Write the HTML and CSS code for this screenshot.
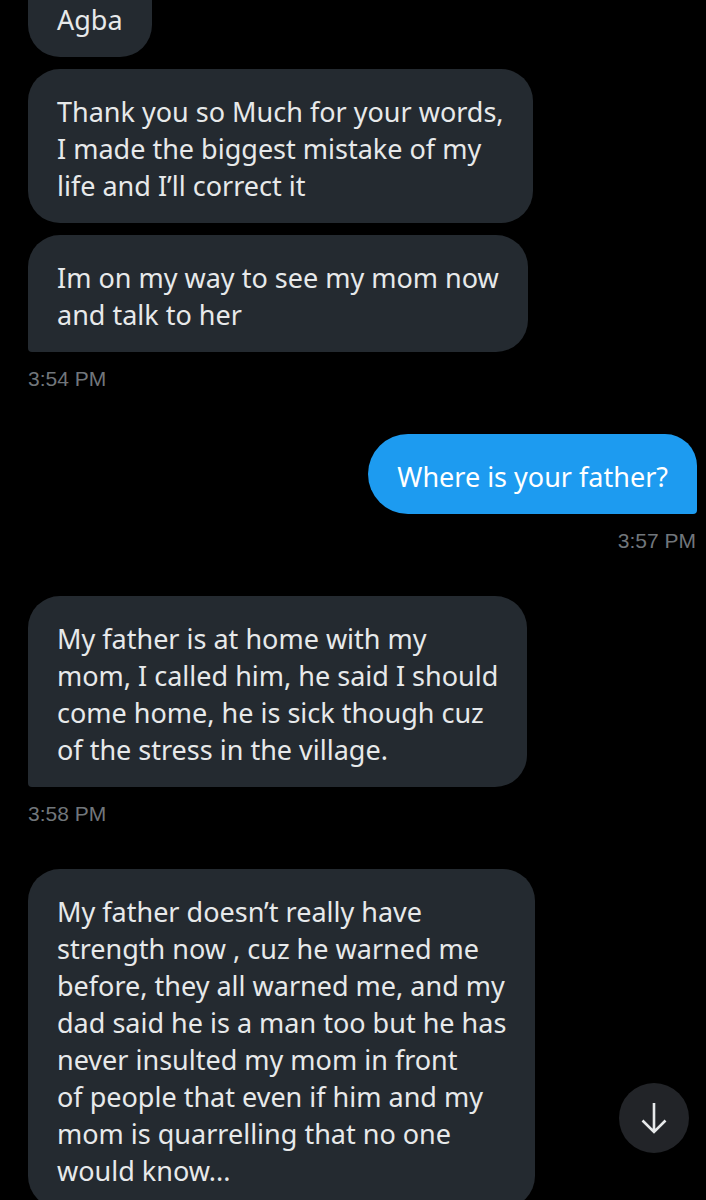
FILE: index.html
```html
<!DOCTYPE html>
<html lang="en">
<head>
<meta charset="utf-8">
<link rel="stylesheet" href="styles.css">
</head>
<body>
<div class="chat">
  <div class="group in">
    <div class="bubble first-cut">Agba</div>
    <div class="bubble">Thank you so Much for your words,<br>I made the biggest mistake of my<br>life and I’ll correct it</div>
    <div class="bubble last">Im on my way to see my mom now<br>and talk to her</div>
    <div class="time">3:54 PM</div>
  </div>
  <div class="group out">
    <div class="bubble last">Where is your father?</div>
    <div class="time">3:57 PM</div>
  </div>
  <div class="group in">
    <div class="bubble last">My father is at home with my<br>mom, I called him, he said I should<br>come home, he is sick though cuz<br>of the stress in the village.</div>
    <div class="time">3:58 PM</div>
  </div>
  <div class="group in">
    <div class="bubble">My father doesn’t really have<br>strength now , cuz he warned me<br>before, they all warned me, and my<br>dad said he is a man too but he has<br>never insulted my mom in front<br>of people that even if him and my<br>mom is quarrelling that no one<br>would know...</div>
  </div>
</div>
<button class="scroll-down" aria-label="Scroll to bottom">
  <svg viewBox="0 0 28 32" width="28" height="32"><path d="M14 1v29M2.5 18.5L14 30l11.5-11.5" fill="none" stroke="#e7e9ea" stroke-width="2.6"/></svg>
</button>
</body>
</html>
```

FILE: styles.css
```css
* { box-sizing: border-box; }
html, body {
  margin: 0;
  background: #000;
  height: 1200px;
  overflow: hidden;
}
body {
  font-family: "Noto Sans", "Open Sans", sans-serif;
  color: #e7e9ea;
  position: relative;
}
.chat {
  display: flex;
  flex-direction: column;
  padding: 0 9px 0 28px;
  margin-top: -43px;
}
.group {
  display: flex;
  flex-direction: column;
  gap: 12px;
  margin-bottom: 43px;
}
.group.in { align-items: flex-start; }
.group.out { align-items: flex-end; }
.bubble {
  background: #242a30;
  font-size: 27px;
  line-height: 37px;
  padding: 24px 29px 19px;
  border-radius: 32px;
  white-space: nowrap;
}
.group.in .bubble.last { border-bottom-left-radius: 4px; }
.group.out .bubble {
  background: #1d9bf0;
  color: #fff;
  border-radius: 40px 32px 4px 40px;
}
.first-cut { padding-top: 44px; }
.time {
  font-family: "Liberation Sans", Arial, sans-serif;
  font-size: 21px;
  line-height: 24px;
  color: #71767b;
  margin-top: 3px;
  padding-left: 0;
}
.group.out .time { padding-right: 1px; }
.scroll-down {
  position: absolute;
  left: 619px;
  top: 1083px;
  width: 70px;
  height: 70px;
  border-radius: 50%;
  border: none;
  background: #222428;
  display: flex;
  align-items: center;
  justify-content: center;
  padding: 0;
}
```
